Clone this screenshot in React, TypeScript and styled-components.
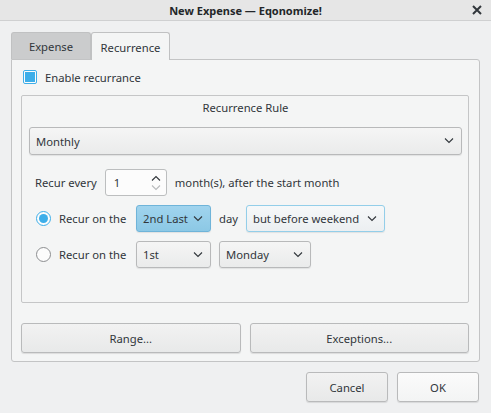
import React from 'react'
import styled, {createGlobalStyle} from 'styled-components'

const GlobalStyle = createGlobalStyle`
  html, body {
    margin: 0;
    padding: 0;
    background: #eff0f1;
  }
  body {
    font-family: "Noto Sans", "DejaVu Sans", sans-serif;
    font-size: 11.25px;
    color: #31363b;
  }
`

const Window = styled.div`
  width: 491px;
  height: 413px;
  display: flex;
  flex-direction: column;
  background: #eff0f1;
  overflow: hidden;
  white-space: nowrap;
`

const TitleBar = styled.div`
  height: 20px;
  flex: none;
  display: grid;
  grid-template-columns: 1fr auto 1fr;
  align-items: center;
  background: #e6e6e6;
  border-bottom: 1px solid #cfd0d1;
`

const Title = styled.div`
  grid-column: 2;
  font-weight: bold;
  font-size: 11px;
  color: #232629;
`

const CloseBox = styled.div`
  justify-self: end;
  padding-right: 9px;
  display: flex;
  align-items: center;
`

const Body = styled.div`
  flex: 1;
  display: flex;
  flex-direction: column;
  padding: 11px 11px 0 11px;
`

const TabBar = styled.div`
  display: flex;
  height: 27px;
  align-items: flex-start;
`

const Tab = styled.div<{ $active?: boolean; $width: number }>`
  box-sizing: border-box;
  width: ${p => p.$width}px;
  height: ${p => (p.$active ? 28 : 27)}px;
  display: flex;
  align-items: center;
  justify-content: center;
  border: 1px solid #c0c1c2;
  border-bottom: none;
  border-radius: 3px 3px 0 0;
  background: ${p => (p.$active ? '#f4f5f5' : '#cbcccd')};
  position: relative;
  z-index: ${p => (p.$active ? 2 : 1)};
  padding-top: 1px;
`

const Pane = styled.div`
  box-sizing: border-box;
  height: 303px;
  border: 1px solid #c3c4c5;
  border-radius: 0 3px 3px 3px;
  background: #f4f5f5;
  padding: 10px 10px 0 9px;
  display: flex;
  flex-direction: column;
`

const CheckRow = styled.label`
  display: flex;
  align-items: center;
  gap: 8px;
  margin-left: 2px;
  height: 14px;
`

const CheckBox = styled.span`
  box-sizing: border-box;
  width: 14px;
  height: 14px;
  border: 1px solid #3daee9;
  border-radius: 2px;
  background: #fcfcfc;
  display: flex;
  align-items: center;
  justify-content: center;
  &::after {
    content: '';
    width: 10px;
    height: 10px;
    background: #3daee9;
  }
`

const Group = styled.div`
  box-sizing: border-box;
  margin-top: 11px;
  height: 208px;
  border: 1px solid #c5c6c7;
  border-radius: 2px;
  padding: 4px 6px 0 7px;
  display: flex;
  flex-direction: column;
`

const GroupTitle = styled.div`
  text-align: center;
  line-height: 16px;
  height: 16px;
`

const Row = styled.div<{ $top: number; $indent?: number }>`
  display: flex;
  align-items: center;
  margin-top: ${p => p.$top}px;
  padding-left: ${p => p.$indent || 0}px;
  gap: 8px;
`

const Combo = styled.div<{ $width?: number; $variant?: 'normal' | 'selected' | 'hover' }>`
  box-sizing: border-box;
  ${p => (p.$width ? `width: ${p.$width}px;` : 'flex: 1;')}
  height: ${p => (p.$width ? 27 : 28)}px;
  display: flex;
  align-items: center;
  justify-content: space-between;
  padding: 0 7px 0 6px;
  border-radius: 3px;
  border: 1px solid
    ${p => (p.$variant === 'selected' ? '#6fb4d9' : p.$variant === 'hover' ? '#93cee9' : '#b8b9ba')};
  background: ${p =>
    p.$variant === 'selected'
      ? 'linear-gradient(#a0d4ee, #8cc8e5)'
      : p.$variant === 'hover'
        ? 'linear-gradient(#f6f8f9, #eceff1)'
        : 'linear-gradient(#f5f5f5, #eaebeb)'};
  box-shadow: 0 1px 1px rgba(0, 0, 0, 0.08);
`

const Spin = styled.div`
  box-sizing: border-box;
  width: 62px;
  height: 27px;
  border: 1px solid #bcbebf;
  border-radius: 3px;
  background: #fcfcfc;
  display: flex;
  align-items: center;
  justify-content: space-between;
  padding: 0 5px 0 8px;
`

const SpinArrows = styled.div`
  display: flex;
  flex-direction: column;
  gap: 4px;
`

const Radio = styled.span<{ $checked?: boolean }>`
  box-sizing: border-box;
  width: 15px;
  height: 15px;
  border-radius: 50%;
  border: 1px solid ${p => (p.$checked ? '#3daee9' : '#8c8e90')};
  background: #fcfcfc;
  display: flex;
  align-items: center;
  justify-content: center;
  margin-left: 7px;
  &::after {
    content: '';
    width: 9px;
    height: 9px;
    border-radius: 50%;
    background: ${p => (p.$checked ? '#3daee9' : 'transparent')};
  }
`

const RadioLabel = styled.span`
  width: 69px;
`

const GroupFiller = styled.div`
  flex: 1;
`

const ButtonRow = styled.div<{ $top: number; $end?: boolean }>`
  display: flex;
  gap: 9px;
  margin-top: ${p => p.$top}px;
  justify-content: ${p => (p.$end ? 'flex-end' : 'stretch')};
`

const Button = styled.div<{ $width?: number; $default?: boolean }>`
  box-sizing: border-box;
  ${p => (p.$width ? `width: ${p.$width}px;` : 'flex: 1;')}
  height: 30px;
  display: flex;
  align-items: center;
  justify-content: center;
  border: 1px solid #b9babb;
  border-radius: 3px;
  background: ${p => (p.$default ? 'linear-gradient(#fbfbfb, #f3f4f4)' : 'linear-gradient(#f2f2f2, #e8e9e9)')};
  box-shadow: 0 1px 1px rgba(0, 0, 0, 0.1);
`

const Footer = styled(ButtonRow)`
  padding-right: 1px;
`

const Chevron = ({up, color = '#31363b'}: { up?: boolean; color?: string }) => (
  <svg width="10" height="6" viewBox="0 0 10 6">
    <polyline
      points={up ? '1,5.5 5,1.5 9,5.5' : '1,0.5 5,4.5 9,0.5'}
      fill="none"
      stroke={color}
      strokeWidth="1.1"
    />
  </svg>
)

const CloseIcon = () => (
  <svg width="10" height="10" viewBox="0 0 10 10">
    <path d="M1 1 L9 9 M9 1 L1 9" stroke="#31363b" strokeWidth="2"/>
  </svg>
)

const App = () => {
  return (
    <>
      <GlobalStyle/>
      <Window>
        <TitleBar>
          <Title>New Expense — Eqonomize!</Title>
          <CloseBox><CloseIcon/></CloseBox>
        </TitleBar>
        <Body>
          <TabBar>
            <Tab $width={80}>Expense</Tab>
            <Tab $width={79} $active>Recurrence</Tab>
          </TabBar>
          <Pane>
            <CheckRow>
              <CheckBox/>
              Enable recurrance
            </CheckRow>
            <Group>
              <GroupTitle>Recurrence Rule</GroupTitle>
              <Row $top={11}>
                <Combo>
                  <span>Monthly</span>
                  <Chevron/>
                </Combo>
              </Row>
              <Row $top={14} $indent={6}>
                <span>Recur every</span>
                <Spin>
                  <span>1</span>
                  <SpinArrows>
                    <Chevron up/>
                    <Chevron color="#b8babc"/>
                  </SpinArrows>
                </Spin>
                <span>month(s), after the start month</span>
              </Row>
              <Row $top={9}>
                <Radio $checked/>
                <RadioLabel>Recur on the</RadioLabel>
                <Combo $width={75} $variant="selected">
                  <span>2nd Last</span>
                  <Chevron/>
                </Combo>
                <span>day</span>
                <Combo $width={139} $variant="hover">
                  <span>but before weekend</span>
                  <Chevron/>
                </Combo>
              </Row>
              <Row $top={9}>
                <Radio/>
                <RadioLabel>Recur on the</RadioLabel>
                <Combo $width={75}>
                  <span>1st</span>
                  <Chevron/>
                </Combo>
                <Combo $width={92}>
                  <span>Monday</span>
                  <Chevron/>
                </Combo>
              </Row>
              <GroupFiller/>
            </Group>
            <ButtonRow $top={20}>
              <Button>Range...</Button>
              <Button>Exceptions...</Button>
            </ButtonRow>
          </Pane>
          <Footer $top={10} $end>
            <Button $width={82}>Cancel</Button>
            <Button $width={82} $default>OK</Button>
          </Footer>
        </Body>
      </Window>
    </>
  )
}

export default App
